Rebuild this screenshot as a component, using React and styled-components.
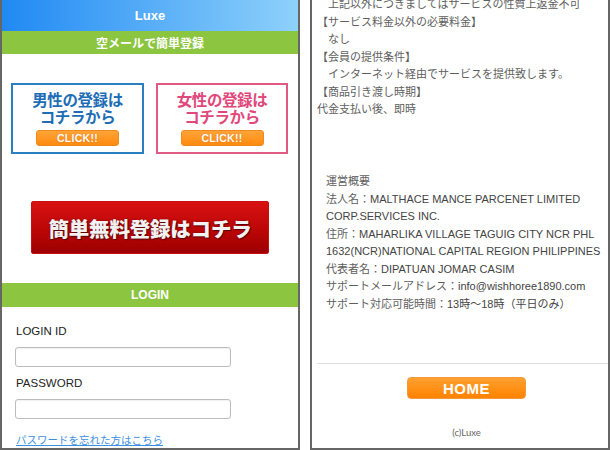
import React from "react";
import styled, { createGlobalStyle } from "styled-components";

const Global = createGlobalStyle`
  html, body {
    margin: 0;
    padding: 0;
    background: #fff;
  }
  body {
    font-family: "Liberation Sans", Arial, "Noto Sans CJK JP", sans-serif;
  }
  * {
    box-sizing: border-box;
  }
`;

const Page = styled.div`
  display: flex;
  gap: 10px;
  width: 610px;
  height: 450px;
  overflow: hidden;
`;

const Phone = styled.div`
  width: 300px;
  height: 450px;
  border: 2px solid #666;
  border-top: none;
  overflow: hidden;
  display: flex;
  flex-direction: column;
  background: #fff;
  padding: ${props => props.pad || "0"};
`;

const Header = styled.div`
  height: 31px;
  flex-shrink: 0;
  display: flex;
  align-items: center;
  justify-content: center;
  background: linear-gradient(90deg, #2089f3, #8ed1fb);
  color: #fff;
  font-weight: 700;
  font-size: 13px;
`;

const GreenBar = styled.div`
  height: ${props => props.h || 23}px;
  margin-top: ${props => props.mt || 0}px;
  flex-shrink: 0;
  display: flex;
  align-items: center;
  justify-content: center;
  background: #8cc641;
  color: #fff;
  font-weight: 700;
  font-size: 12px;
  font-family: "Liberation Sans", "Noto Sans CJK JP", sans-serif;
`;

const Choices = styled.div`
  display: grid;
  grid-template-columns: 133px 132px;
  gap: 12px;
  padding: 29px 0 0 9px;
`;

const ChoiceBox = styled.div`
  height: 71px;
  border: 2px solid ${props => props.tone};
  display: flex;
  flex-direction: column;
  align-items: center;
  padding-top: 6px;

  p {
    margin: 0;
    text-align: center;
    color: ${props => props.text};
    font-family: "Noto Sans CJK JP", sans-serif;
    font-weight: 700;
    font-size: 15.5px;
    line-height: 17px;
    letter-spacing: -0.4px;
  }
`;

const ClickBtn = styled.div`
  margin-top: 5px;
  width: 83px;
  height: 16px;
  border-radius: 3px;
  background: linear-gradient(#ffa43a, #ff8a0c);
  border: 1px solid #f08a1c;
  display: flex;
  align-items: center;
  justify-content: center;
  color: #fff;
  font-family: "Liberation Sans", Arial, sans-serif;
  font-size: 10.5px;
  font-weight: 700;
  letter-spacing: 0.3px;
  text-shadow: 0 0 1px rgba(160, 70, 0, 0.5);
`;

const BigButton = styled.div`
  margin: 47px auto 0;
  width: 238px;
  height: 53px;
  border-radius: 2px;
  border: 1px solid #c91010;
  background: linear-gradient(#d91212, #b80505 60%, #9c0000);
  display: flex;
  align-items: center;
  justify-content: center;
  color: #f2f2f2;
  font-family: "Noto Sans CJK JP", sans-serif;
  font-weight: 900;
  font-size: 20.5px;
  letter-spacing: -0.2px;
  text-shadow: 1px 1px 1px #5a0000, 0 0 2px #7a0000;
`;

const Form = styled.div`
  padding: 0 0 0 13px;
  display: flex;
  flex-direction: column;
  align-items: flex-start;
`;

const Label = styled.div`
  margin-top: ${props => props.mt}px;
  line-height: 16px;
  font-size: 11.5px;
  color: #222;
  padding-left: 1px;
`;

const Input = styled.div`
  margin-top: 8px;
  width: 216px;
  height: 20px;
  border: 1px solid #bcbcbc;
  border-radius: 3px;
  box-shadow: inset 0 1px 1px rgba(0, 0, 0, 0.06);
`;

const ForgotLink = styled.a`
  margin-top: 14px;
  padding-left: 1px;
  line-height: 14px;
  font-size: 10.5px;
  font-family: "Noto Sans CJK JP", sans-serif;
  color: #3d8fe0;
  text-decoration: underline;
`;

const TextBlock = styled.div`
  margin-top: ${props => props.mt || 0}px;
  padding-left: ${props => props.indent || 0}px;
  font-size: 11px;
  line-height: 17.5px;
  color: #5e5e5e;
  white-space: nowrap;
  font-family: "Liberation Sans", Arial, "Noto Sans CJK JP", sans-serif;

  b {
    font-weight: 400;
    color: #444;
  }
`;

const Line = styled.div``;

const Rule = styled.div`
  margin-top: 50px;
  height: 1px;
  background: #ddd;
  flex-shrink: 0;
`;

const Footer = styled.div`
  display: flex;
  flex-direction: column;
  align-items: center;
  padding-left: 8px;
`;

const HomeButton = styled.div`
  margin-top: 13px;
  width: 119px;
  height: 22px;
  border-radius: 4px;
  background: linear-gradient(#ffa030, #ff8200);
  border: 1px solid #f59a3a;
  display: flex;
  align-items: center;
  justify-content: center;
  color: #fff;
  font-weight: 700;
  font-size: 15px;
  letter-spacing: 0.5px;
`;

const Copy = styled.div`
  margin-top: 28px;
  font-size: 9.5px;
  line-height: 12px;
  color: #666;
  font-family: Lato, "Liberation Sans", sans-serif;
`;

const upperLines = [
  "　上記以外につきましてはサービスの性質上返金不可",
  "【サービス料金以外の必要料金】",
  "　なし",
  "【会員の提供条件】",
  "　インターネット経由でサービスを提供致します。",
  "【商品引き渡し時期】",
  "代金支払い後、即時",
];

const companyLines = [
  ["運営概要", ""],
  ["法人名：", "MALTHACE MANCE PARCENET LIMITED"],
  ["", "CORP.SERVICES INC."],
  ["住所：", "MAHARLIKA VILLAGE TAGUIG CITY NCR PHL"],
  ["", "1632(NCR)NATIONAL CAPITAL REGION PHILIPPINES"],
  ["代表者名：", "DIPATUAN JOMAR CASIM"],
  ["サポートメールアドレス：", "info@wishhoree1890.com"],
  ["サポート対応可能時間：", "13時～18時（平日のみ）"],
];

const App = () => {
  return (
    <Page>
      <Global />
      <Phone>
        <Header>Luxe</Header>
        <GreenBar>空メールで簡単登録</GreenBar>
        <Choices>
          <ChoiceBox tone="#2a7fc1" text="#1d6db6">
            <p>
              男性の登録は
              <br />
              コチラから
            </p>
            <ClickBtn>CLICK!!</ClickBtn>
          </ChoiceBox>
          <ChoiceBox tone="#df5b84" text="#e0487b">
            <p>
              女性の登録は
              <br />
              コチラから
            </p>
            <ClickBtn>CLICK!!</ClickBtn>
          </ChoiceBox>
        </Choices>
        <BigButton>簡単無料登録はコチラ</BigButton>
        <GreenBar h={24} mt={29}>LOGIN</GreenBar>
        <Form>
          <Label mt={16}>LOGIN ID</Label>
          <Input />
          <Label mt={8}>PASSWORD</Label>
          <Input />
          <ForgotLink href="#">パスワードを忘れた方はこちら</ForgotLink>
        </Form>
      </Phone>

      <Phone pad="0 0 0 5px">
        <TextBlock mt={-4}>
          {upperLines.map((t, i) => (
            <Line key={i}>{t}</Line>
          ))}
        </TextBlock>
        <TextBlock mt={54.5} indent={9}>
          {companyLines.map(([jp, en], i) => (
            <Line key={i}>
              {jp}
              {en && <b>{en}</b>}
            </Line>
          ))}
        </TextBlock>
        <Rule />
        <Footer>
          <HomeButton>HOME</HomeButton>
          <Copy>(c)Luxe</Copy>
        </Footer>
      </Phone>
    </Page>
  );
};

export default App;
